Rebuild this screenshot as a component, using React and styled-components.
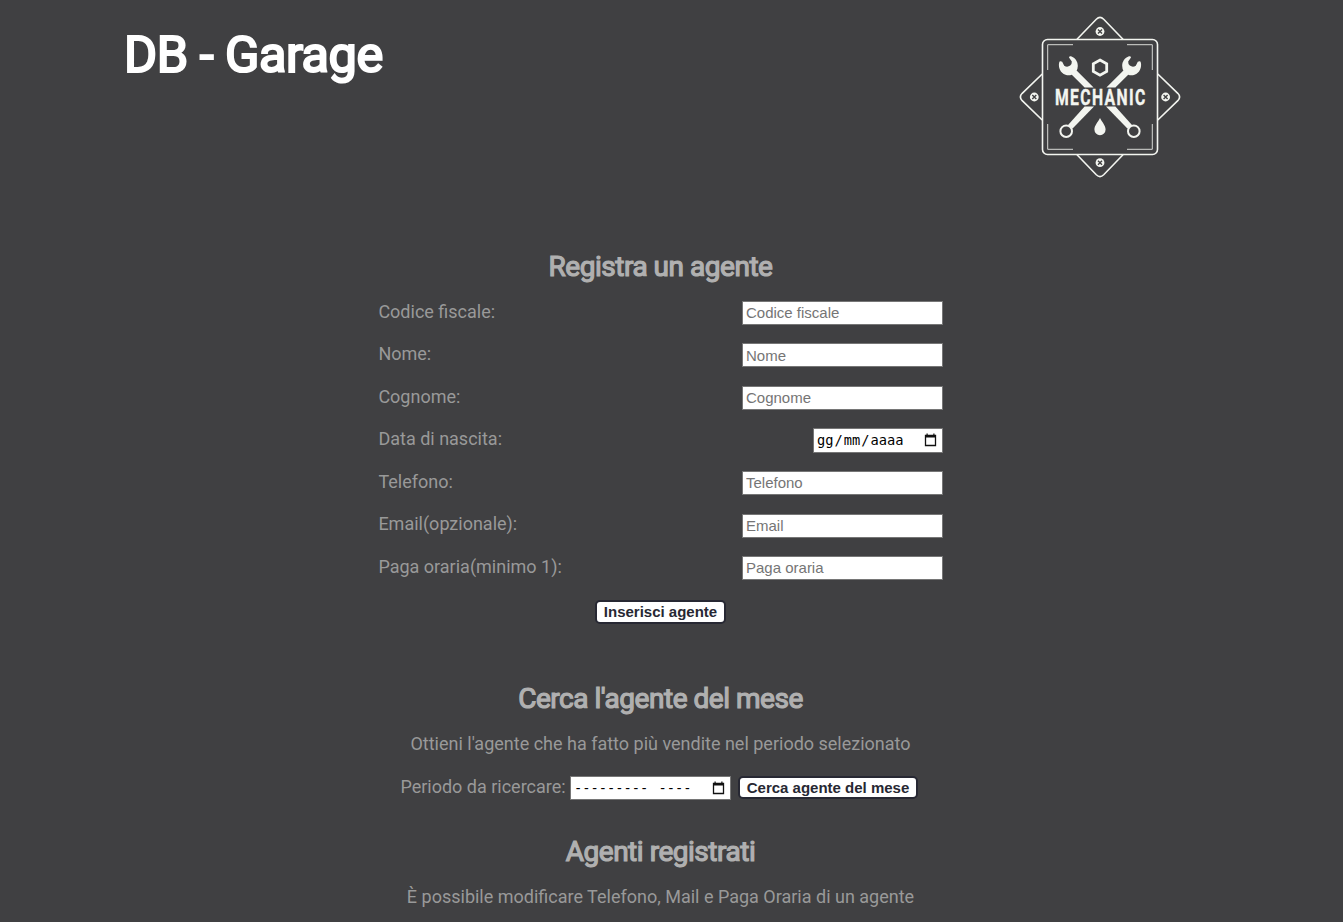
import React from "react";
import styled, { createGlobalStyle } from "styled-components";

const GlobalStyle = createGlobalStyle`
  * { box-sizing: border-box; }
  body {
    margin: 0;
    background: #404042;
    color: #999;
    font: 18px/27px Roboto, sans-serif;
    overflow: hidden;
  }
`;

const Header = styled.header`
  display: flex;
  justify-content: space-between;
  align-items: flex-start;
  height: 187px;
  padding: 7px 153px 0 124px;
`;

const Title = styled.h1`
  margin: 18px 0 0;
  color: #fff;
  font-size: 50.5px;
  line-height: 60px;
  font-weight: 400;
  letter-spacing: -0.5px;
  -webkit-text-stroke: 2.2px #fff;
  white-space: nowrap;
`;

const Main = styled.main`
  display: flex;
  flex-direction: column;
  align-items: center;
  width: 565px;
  margin: 0 0 0 378px;
`;

const Heading = styled.h2`
  margin: ${(p) => p.$top}px 0 0;
  color: #b0b0b0;
  font-size: 28px;
  line-height: 36px;
  font-weight: 400;
  letter-spacing: -0.47px;
  -webkit-text-stroke: 1.2px #b0b0b0;
  white-space: nowrap;
`;

const Form = styled.form`
  display: flex;
  flex-direction: column;
  align-items: center;
  width: 100%;
  padding-top: 12px;
`;

const Row = styled.div`
  display: flex;
  justify-content: space-between;
  align-items: flex-start;
  width: 100%;
  height: 42.55px;
`;

const Label = styled.label`
  padding: 0.7px 0 0 0.4px;
  white-space: nowrap;
`;

const Input = styled.input`
  width: 201px;
  height: 24px;
  margin-top: 3.8px;
  padding: 1px 3px 1.4px;
  border: 1px solid #767676;
  border-radius: 0;
  background: #fff;
  font: 15px "Liberation Sans", sans-serif;
  &::placeholder { color: #757575; }
`;

const PickerBox = styled.div`
  display: flex;
  align-items: center;
  justify-content: space-between;
  width: ${(p) => p.$width}px;
  height: ${(p) => p.$height ?? 25}px;
  margin-top: ${(p) => p.$top}px;
  padding: 0 5px 0 2px;
  border: 1px solid #767676;
  background: #fff;
  color: #000;
  font: 13.7px "DejaVu Sans Mono", monospace;
  white-space: pre;
`;

const Field = styled.span`
  padding: 0 1px;
`;

const Button = styled.button`
  width: ${(p) => p.$width}px;
  height: ${(p) => p.$height ?? 24}px;
  margin: ${(p) => p.$top}px 0 0 ${(p) => p.$left ?? 0}px;
  padding: ${(p) => p.$padTop ?? 0}px 0 0;
  border: 2px solid #272833;
  border-radius: 5px;
  background: #fff;
  color: #272833;
  font: bold 15px/18px "Liberation Sans", sans-serif;
  white-space: nowrap;
`;

const Text = styled.p`
  margin: ${(p) => p.$top}px 0 0;
  white-space: nowrap;
`;

const Search = styled.form`
  display: flex;
  align-items: flex-start;
  margin-top: 16px;
  margin-right: 3px;
`;

const PeriodLabel = styled(Label)`
  width: 170px;
  padding-top: 0;
`;

const CalendarIcon = () => (
  <svg width="13" height="14" viewBox="0 0 13 14" fill="none">
    <path d="M1.5 2.5h10v10h-10z" stroke="#111" strokeWidth="1.3" />
    <path d="M1 2h11v2.6H1zM2.5 0.5h1.2v2H2.5zM9.3 0.5h1.2v2H9.3z" fill="#111" />
  </svg>
);

const Screw = ({ x, y }) => (
  <g transform={`translate(${x} ${y})`}>
    <circle r="4.4" fill="#f3f5f0" />
    <path d="M-2-2L2 2M2-2L-2 2" stroke="#404042" strokeWidth="1.4" />
  </g>
);

const Wrench = () => (
  <g fill="#f3f5f0">
    <path d="M50.4 54.2L52.2 54.8L54.2 58.8Q57.3 60.6 60.2 58.6Q62 57 61.8 54.4L59 50.6Q59.2 48.8 61 49.2C65.2 50.6 68 54.6 67.8 59Q67.7 61.8 66.6 63.6L83.6 80.5H74.6L61.8 67.8Q58.6 68.8 55.5 67.8C50.4 66 48 60 49.2 55.4Q49.6 54 50.4 54.2Z" />
    <path d="M57.6 118.6L74.6 99.6H84L62.6 121.6Z" />
    <circle cx="56.2" cy="124.2" r="5.8" fill="#404042" stroke="#f3f5f0" strokeWidth="2" />
  </g>
);

const Ear = ({ angle }) => (
  <path d="M67 32.2L86.3 12.2Q90 8.6 93.7 12.2L113 32.2" transform={`rotate(${angle} 90 90)`} />
);

const Corner = ({ angle }) => (
  <path d="M37.7 63V37.7H63" transform={`rotate(${angle} 90 90)`} />
);

const Logo = () => (
  <svg width="180" height="180" viewBox="0 0 180 180">
    <g fill="none" stroke="#f3f5f0" strokeWidth="1.6">
      <rect x="32.5" y="32.5" width="115" height="115" rx="5" />
      {[0, 90, 180, 270].map((a) => <Ear key={a} angle={a} />)}
    </g>
    <g fill="none" stroke="#d8d9d6" strokeWidth="1">
      {[0, 90, 180, 270].map((a) => <Corner key={a} angle={a} />)}
    </g>
    <Screw x={90} y={24.5} />
    <Screw x={24.3} y={90} />
    <Screw x={155.6} y={90} />
    <Screw x={90} y={155.7} />
    <Wrench />
    <g transform="translate(180 0) scale(-1 1)"><Wrench /></g>
    <path d="M90 53L96.7 56.8V64.4L90 68.2L83.3 64.4V56.8Z" fill="none" stroke="#f3f5f0" strokeWidth="2.8" />
    <path d="M90 111C92 115 95.6 118.5 95.6 122.6A5.6 5.6 0 0 1 84.4 122.6C84.4 118.5 88 115 90 111Z" fill="#f3f5f0" />
    <text
      transform="translate(44.9 98.4) scale(.69 1)"
      textLength="131"
      lengthAdjust="spacing"
      fill="#f3f5f0"
      stroke="#f3f5f0"
      strokeWidth="0.4"
      fontFamily="Roboto, sans-serif"
      fontWeight="700"
      fontSize="22.8"
    >
      MECHANIC
    </text>
  </svg>
);

const fieldsBefore = [
  ["Codice fiscale:", "Codice fiscale"],
  ["Nome:", "Nome"],
  ["Cognome:", "Cognome"],
];
const fieldsAfter = [
  ["Telefono:", "Telefono"],
  ["Email(opzionale):", "Email"],
  ["Paga oraria(minimo 1):", "Paga oraria"],
];

const InputRow = ({ label, placeholder }) => (
  <Row>
    <Label>{label}</Label>
    <Input placeholder={placeholder} />
  </Row>
);

export default function App() {
  return (
    <>
      <GlobalStyle />
      <Header>
        <Title>DB - Garage</Title>
        <Logo />
      </Header>
      <Main>
        <Heading $top={62}>Registra un agente</Heading>
        <Form>
          {fieldsBefore.map(([l, p]) => <InputRow key={l} label={l} placeholder={p} />)}
          <Row>
            <Label>Data di nascita:</Label>
            <PickerBox $width={130} $top={3}>
              <span><Field>gg</Field>/<Field>mm</Field>/<Field>aaaa</Field></span>
              <CalendarIcon />
            </PickerBox>
          </Row>
          {fieldsAfter.map(([l, p]) => <InputRow key={l} label={l} placeholder={p} />)}
          <Button type="button" $width={131} $top={5}>Inserisci agente</Button>
        </Form>
        <Heading $top={57}>Cerca l'agente del mese</Heading>
        <Text $top={13}>Ottieni l'agente che ha fatto più vendite nel periodo selezionato</Text>
        <Search>
          <PeriodLabel>Periodo da ricercare:</PeriodLabel>
          <PickerBox $width={161} $height={24} $top={3}>
            <span><Field>---------</Field> <Field>----</Field></span>
            <CalendarIcon />
          </PickerBox>
          <Button type="button" $width={180} $height={23} $top={3} $left={7} $padTop={1}>Cerca agente del mese</Button>
        </Search>
        <Heading $top={34}>Agenti registrati</Heading>
        <Text $top={13}>È possibile modificare Telefono, Mail e Paga Oraria di un agente</Text>
      </Main>
    </>
  );
}
